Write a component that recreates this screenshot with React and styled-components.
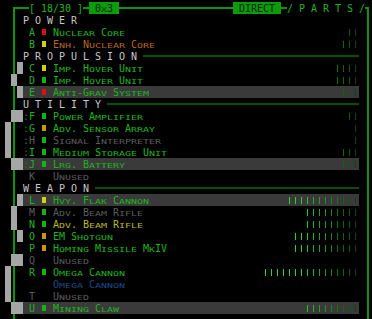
import React from 'react';
import styled, { createGlobalStyle } from 'styled-components';

const C = {
  frame: '#0b960b',
  tag: '#0b9c0b',
  tagText: '#012801',
  text: '#1eb41e',
  off: '#5c5c5c',
  head: '#c8c8c8',
  orange: '#b8661e',
  yellow: '#b9b91c',
  blue: '#1c4a86',
  mark: '#2a6a2a',
  rule: '#0a4e0a',
  hi: '#3a3a3a',
  block: '#a6a6a6',
};

const SWATCH = {
  red: '#dc1010',
  yellow: '#d2d20a',
  orange: '#cc960a',
  green: '#12b412',
};

const sections = [
  {
    title: 'POWER',
    rule: false,
    parts: [
      { key: 'A', sw: 'red', name: 'Nuclear Core', bars: 2 },
      { key: 'B', sw: 'yellow', name: 'Enh. Nuclear Core', tone: 'orange', bars: 3 },
    ],
  },
  {
    title: 'PROPULSION',
    parts: [
      { key: 'C', sw: 'yellow', name: 'Imp. Hover Unit', bars: 4, slot: [3, 1] },
      { key: 'D', sw: 'green', name: 'Imp. Hover Unit', bars: 4, slot: [2, 1] },
      { key: 'E', sw: 'red', name: 'Anti-Grav System', bars: 3, slot: [3, 1], active: true },
    ],
  },
  {
    title: 'UTILITY',
    parts: [
      { key: 'F', mark: ':', sw: 'green', name: 'Power Amplifier', bars: 2, slot: [2, 2] },
      { key: 'G', mark: ':', sw: 'orange', name: 'Adv. Sensor Array', bars: 1, slot: [1, 1] },
      { key: 'H', mark: ':', sw: 'green', name: 'Signal Interpreter', bars: 1, slot: [1, 1], off: true },
      { key: 'I', mark: ':', sw: 'green', name: 'Medium Storage Unit', bars: 3, slot: [1, 1] },
      { key: 'J', mark: ':', sw: 'green', name: 'Lrg. Battery', bars: 3, slot: [2, 2], active: true },
      { key: 'K', name: 'Unused', off: true },
    ],
  },
  {
    title: 'WEAPON',
    parts: [
      { key: 'L', sw: 'yellow', name: 'Hvy. Flak Cannon', bars: 12, slot: [3, 1], active: true },
      { key: 'M', sw: 'green', name: 'Adv. Beam Rifle', bars: 9, slot: [2, 1], off: true },
      { key: 'N', sw: 'green', name: 'Adv. Beam Rifle', tone: 'yellow', bars: 9, slot: [2, 1] },
      { key: 'O', sw: 'orange', name: 'EM Shotgun', bars: 11, slot: [3, 1] },
      { key: 'P', sw: 'orange', name: 'Homing Missile MkIV', bars: 11 },
      { key: 'Q', name: 'Unused', off: true, slot: [2, 2] },
      { key: 'R', sw: 'green', name: 'Omega Cannon', bars: 16, slot: [1, 1] },
      { key: '', name: 'Omega Cannon', tone: 'blue', slot: [1, 1] },
      { key: 'T', name: 'Unused', off: true, slot: [1, 1] },
      { key: 'U', sw: 'green', name: 'Mining Claw', bars: 9, slot: [2, 2], active: true },
    ],
  },
];

// bar colour fades from dark (rightmost) to bright (further left)
const DARK = [10, 70, 10];
const BRIGHT = [42, 210, 42];
const tickColor = i => {
  const t = Math.min(i / 9, 1);
  const c = DARK.map((d, k) => Math.round(d + (BRIGHT[k] - d) * t));
  return `rgb(${c.join(',')})`;
};

function Glyphs({ text, color }) {
  return (
    <Word $color={color}>
      {[...text].map((ch, i) => {
        const small = ch !== ch.toUpperCase();
        return (
          <Ch key={i} $small={small}>
            {small ? ch.toUpperCase() : ch}
          </Ch>
        );
      })}
    </Word>
  );
}

function PartRow({ part }) {
  const { key, mark, sw, name, bars = 0, slot, active, off, tone } = part;
  const keyColor = off ? C.off : C.text;
  const nameColor = off ? C.off : tone ? C[tone] : C.text;
  return (
    <Row>
      <Gutter>{slot && <Block $col={slot[0]} $span={slot[1]} />}</Gutter>
      <Main $active={active}>
        <Glyphs text={mark || ' '} color={off ? C.off : C.mark} />
        <Glyphs text={key || ' '} color={keyColor} />
        <SwatchSlot>{sw && <Swatch $c={SWATCH[sw]} />}</SwatchSlot>
        <Glyphs text={name} color={nameColor} />
        <Ticks>
          {Array.from({ length: bars }, (_, j) => (
            <Tick key={j} $c={tickColor(bars - 1 - j)} />
          ))}
        </Ticks>
      </Main>
    </Row>
  );
}

function SectionRow({ title, rule = true }) {
  return (
    <Row>
      <Gutter />
      <Main>
        <Glyphs text={title.split('').join(' ')} color={C.head} />
        {rule && <SectionRule />}
      </Main>
    </Row>
  );
}

export default function App() {
  return (
    <>
      <GlobalStyle />
      <Screen>
        <Row>
          <FrameRule $w={16} $ml={8} />
          <Glyphs text="[ 18/30 ]" color={C.text} />
          <FrameRule $w={6} />
          <Tag>
            <Glyphs text=" 0x3 " color={C.tagText} />
          </Tag>
          <FrameRule $w={114} />
          <Tag>
            <Glyphs text=" DIRECT " color={C.tagText} />
          </Tag>
          <FrameRule $w={6} />
          <Glyphs text="/ P A R T S /" color={C.text} />
          <FrameRule $w={4} />
        </Row>
        {sections.map(s => (
          <React.Fragment key={s.title}>
            <SectionRow title={s.title} rule={s.rule !== false} />
            {s.parts.map((p, i) => (
              <PartRow key={i} part={p} />
            ))}
          </React.Fragment>
        ))}
      </Screen>
    </>
  );
}

const GlobalStyle = createGlobalStyle`
  html, body {
    margin: 0;
    padding: 0;
    background: #000;
  }
`;

const Screen = styled.div`
  width: 372px;
  height: 319px;
  box-sizing: border-box;
  padding-top: 2px;
  overflow: hidden;
  background:
    linear-gradient(${C.frame}, ${C.frame}) 13px 7px / 2px 100% no-repeat,
    linear-gradient(${C.frame}, ${C.frame}) 367px 7px / 2px 100% no-repeat,
    #000;
  font-family: "DejaVu Sans Mono", "Liberation Mono", monospace;
  font-size: 10px;
`;

const Row = styled.div`
  display: flex;
  height: 12px;
  padding-left: 5px;
`;

const Gutter = styled.div`
  display: grid;
  grid-template-columns: repeat(3, 6px);
  flex: none;
  width: 18px;
  height: 12px;
`;

const Block = styled.div`
  grid-column: ${p => p.$col} / span ${p => p.$span};
  background: ${C.block};
`;

const Main = styled.div`
  display: flex;
  flex: none;
  width: 336px;
  height: 12px;
  background: ${p => (p.$active ? C.hi : 'transparent')};
`;

const Word = styled.span`
  display: block;
  flex: none;
  height: 12px;
  box-sizing: border-box;
  padding-top: 1px;
  line-height: 11px;
  white-space: pre;
  color: ${p => p.$color};
`;

const Ch = styled.span`
  display: inline-block;
  width: 6px;
  transform: ${p => (p.$small ? 'scaleY(0.7)' : 'none')};
  transform-origin: 50% 9px;
`;

const SwatchSlot = styled.span`
  display: flex;
  justify-content: center;
  flex: none;
  width: 18px;
  padding-top: 3px;
  box-sizing: border-box;
`;

const Swatch = styled.span`
  width: 4px;
  height: 6px;
  background: ${p => p.$c};
`;

const Ticks = styled.span`
  display: flex;
  margin-left: auto;
`;

const Tick = styled.span`
  width: 1px;
  height: 7px;
  margin: 3px 3px 0 2px;
  background: ${p => p.$c};
`;

const SectionRule = styled.span`
  flex: 1;
  align-self: center;
  height: 2px;
  margin-left: 6px;
  background: ${C.rule};
`;

const FrameRule = styled.span`
  flex: none;
  align-self: center;
  width: ${p => p.$w}px;
  height: 2px;
  margin-left: ${p => p.$ml || 0}px;
  background: ${C.frame};
`;

const Tag = styled.span`
  display: flex;
  flex: none;
  background: ${C.tag};
`;
